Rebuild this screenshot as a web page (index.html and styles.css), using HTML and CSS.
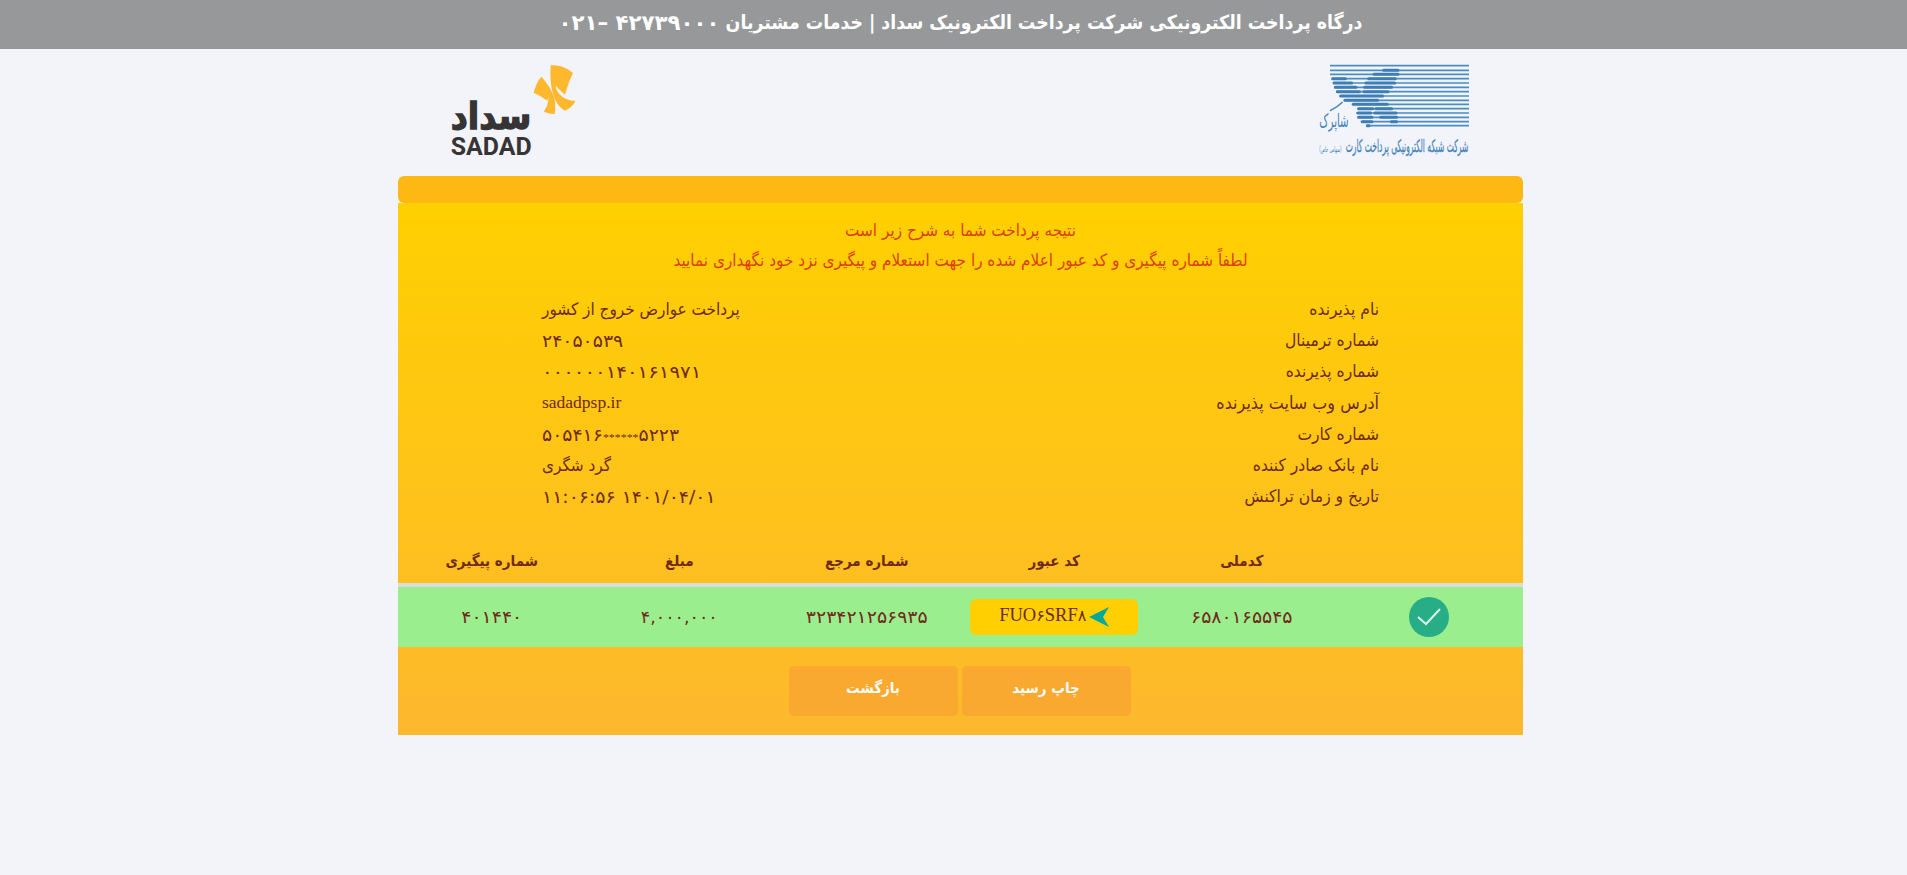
FILE: index.html
```html
<!DOCTYPE html>
<html lang="fa" dir="rtl">
<head>
<meta charset="utf-8">
<title>درگاه پرداخت الکترونیکی سداد</title>
<link rel="stylesheet" href="styles.css">
</head>
<body>
<header class="topbar"><span class="topbar-title">درگاه پرداخت الکترونیکی شرکت پرداخت الکترونیک سداد | خدمات مشتریان</span> <span class="topbar-phone" dir="ltr">۰۲۱– ۴۲۷۳۹۰۰۰</span></header>
<div class="logos">
  <svg class="shaparak" viewBox="0 0 570 360" role="img" aria-label="شاپرک">
    <g stroke="#4b8dc0" stroke-width="5">
      <path d="M90 47H507M90 61H507M90 73H507M95 86H507M99 99H507M102 112H507M108 125H507M118 138H507M131 151H507M155 163H507M172 176H507M169 189H507M172 202H507M182 215H507M198 227H507"/>
    </g>
    <g stroke="#3d7eb5" stroke-width="9" stroke-linecap="round">
      <path d="M251 61H294M222 73H294M98 86H136M206 86H286M102 99H155M198 99H284M106 112H168M194 112H275M112 125H178M192 125H264M122 138H248M135 151H233M160 163H262M176 176H218M228 176H275M174 189H212M224 189H288M176 202H216M242 202H290M187 215H216M274 215H290M202 227H207"/>
    </g>
    <g fill="#3f83ba" font-family="DejaVu Sans" direction="rtl">
      <text x="146" y="230" font-size="56" textLength="88" lengthAdjust="spacingAndGlyphs">شاپرک</text>
      <path d="M90 182Q112 172 128 156" fill="none" stroke="#4a8cbf" stroke-width="5"/>
      <text x="505" y="306" font-size="52" textLength="368" lengthAdjust="spacingAndGlyphs" stroke="#3f83ba" stroke-width=".8">شرکت شبکه الکترونیکی پرداخت کارت</text>
      <text x="124" y="306" font-size="24" textLength="66" lengthAdjust="spacingAndGlyphs">(سهامی خاص)</text>
    </g>
  </svg>
  <svg class="sadad" viewBox="0 0 510 360" role="img" aria-label="سداد">
    <g fill="#fdb82e">
      <path d="M362 46Q398 42 429 69Q414 98 405 134Q388 119 377 107Q378 124 398 142Q420 154 437 152Q426 174 404 182Q382 169 371 139Q358 98 362 46Z"/>
      <path d="M334 80Q319 97 311 128Q334 138 352 152Q355 144 354 132Q358 150 351 168L341 185Q357 192 374 192Q379 166 371 138Q358 105 334 80Z"/>
    </g>
    <g fill="#373435" font-weight="bold">
      <text x="304" y="236" font-family="DejaVu Sans" font-size="110" direction="rtl" textLength="242" lengthAdjust="spacingAndGlyphs" stroke="#373435" stroke-width="4">سداد</text>
      <text x="62" y="314" font-family="Roboto" font-size="77" direction="ltr" textLength="243" lengthAdjust="spacingAndGlyphs">SADAD</text>
    </g>
  </svg>
</div>
<main class="receipt">
  <div class="receipt-cap"></div>
  <div class="receipt-body">
    <p class="notice">نتیجه پرداخت شما به شرح زیر است</p>
    <p class="notice">لطفاً شماره پیگیری و کد عبور اعلام شده را جهت استعلام و پیگیری نزد خود نگهداری نمایید</p>
    <dl class="details">
      <div class="row"><dt>نام پذیرنده</dt><dd>پرداخت عوارض خروج از کشور</dd></div>
      <div class="row"><dt>شماره ترمینال</dt><dd class="num" dir="ltr">۲۴۰۵۰۵۳۹</dd></div>
      <div class="row"><dt>شماره پذیرنده</dt><dd class="num num-wide" dir="ltr">۰۰۰۰۰۰۱۴۰۱۶۱۹۷۱</dd></div>
      <div class="row"><dt class="wide">آدرس وب سایت پذیرنده</dt><dd class="latin" dir="ltr">sadadpsp.ir</dd></div>
      <div class="row"><dt>شماره کارت</dt><dd class="num" dir="ltr">۵۰۵۴۱۶<span class="mask">******</span>۵۲۲۳</dd></div>
      <div class="row"><dt>نام بانک صادر کننده</dt><dd>گرد شگری</dd></div>
      <div class="row"><dt>تاریخ و زمان تراکنش</dt><dd class="num" dir="ltr"><bdi>۱۱:۰۶:۵۶</bdi> <bdi dir="ltr">۱۴۰۱/۰۴/۰۱</bdi></dd></div>
    </dl>
    <div class="grid head"><span></span><span>کدملی</span><span>کد عبور</span><span>شماره مرجع</span><span>مبلغ</span><span>شماره پیگیری</span></div>
    <div class="grid data">
      <span class="cell"><svg class="ok" viewBox="0 0 40 40"><circle cx="20" cy="20" r="20" fill="#27ae87"/><path d="M9 20L17 27L31 12" fill="none" stroke="#d8f3ea" stroke-width="2"/></svg></span>
      <span class="cell num">۶۵۸۰۱۶۵۵۴۵</span>
      <span class="cell"><span class="code" dir="ltr"><span class="code-text">FUO<small>۶</small>SRF<small>۸</small></span><svg class="arrow" viewBox="0 0 20 20"><path d="M0 10L20 0L14 10L20 20Z" fill="#00aa9b"/></svg></span></span>
      <span class="cell num">۳۲۳۴۲۱۲۵۶۹۳۵</span>
      <span class="cell num amount" dir="ltr">۴,۰۰۰,۰۰۰</span>
      <span class="cell num">۴۰۱۴۴۰</span>
    </div>
    <div class="actions"><button class="btn">چاپ رسید</button><button class="btn">بازگشت</button></div>
  </div>
</main>
</body>
</html>
```
FILE: styles.css
```css
* { box-sizing: border-box; }
body { margin: 0; background: #f3f4fa; color: #6f2a1b; font-family: "DejaVu Sans Condensed", "DejaVu Sans", sans-serif; font-size: 17px; }
.topbar { height: 49px; background: #97989a; color: #fff; font-size: 19.3px; font-weight: bold; display: flex; justify-content: center; gap: 6px; line-height: 46px; white-space: nowrap; padding-left: 14px; }
.topbar-phone { font-family: "DejaVu Sans", sans-serif; font-size: 21.3px; }
.logos { width: 1060px; height: 127px; margin: 0 417px 0 0; display: flex; justify-content: space-between; padding-top: 1px; }
.shaparak { width: 190px; height: 120px; overflow: visible; }
.sadad { width: 170px; height: 120px; overflow: visible; }
.receipt { width: 1125px; margin: 0 384px 0 0; }
.receipt-cap { height: 27px; background: #fdb813; border-radius: 6px; }
.receipt-body { height: 532px; padding-top: 12px; background: linear-gradient(#ffd000, #fdb82e); }
.notice { margin: 0; height: 30px; line-height: 30px; text-align: center; color: #dc3f0d; white-space: nowrap; }
.details { margin: 19px 144px 0; height: 222px; }
.row { display: flex; justify-content: space-between; height: 31.2px; line-height: 31px; }
.row dt { font-size: 17.3px; }
.row dt.wide { font-size: 17.8px; line-height: 29px; }
.row dd { margin: 0; }
.num { font-family: "DejaVu Sans", sans-serif; font-size: 17.5px; transform: scaleX(1.08); }
.row .num { transform-origin: left; line-height: 32px; }
.row .num-wide { transform: scaleX(1.13); }
.data .amount { transform: none; }
.mask { font-family: "Liberation Serif", serif; font-size: 11px; }
.row .latin { font-family: "Liberation Serif", serif; font-size: 17.5px; line-height: 28px; }
.grid { display: grid; grid-template-columns: repeat(6, 1fr); text-align: center; align-items: center; }
.head { height: 71px; padding-top: 23px; border-bottom: 4px solid #dcdcdc; font-size: 15px; font-weight: bold; }
.data { height: 60px; background: #9bee8e; }
.cell { display: flex; justify-content: center; align-items: center; }
.ok { width: 40px; height: 40px; }
.code { display: flex; width: 168px; height: 36px; align-items: center; justify-content: center; gap: 3px; background: #ffcf01; border-radius: 6px; }
.code-text { padding-bottom: 3px; font-family: "Liberation Serif", "DejaVu Sans", serif; font-size: 18.5px; }
.code-text small { font-family: "DejaVu Sans", sans-serif; font-size: 16px; }
.arrow { width: 20px; height: 20px; }
.actions { display: flex; justify-content: center; gap: 4px; padding: 19px 2px 0 0; }
.btn { width: 169px; height: 50px; padding: 0 0 6px; border: 0; border-radius: 5px; background: #f9a830; color: #fff; font: bold 15px "DejaVu Sans Condensed", "DejaVu Sans", sans-serif; }
```
